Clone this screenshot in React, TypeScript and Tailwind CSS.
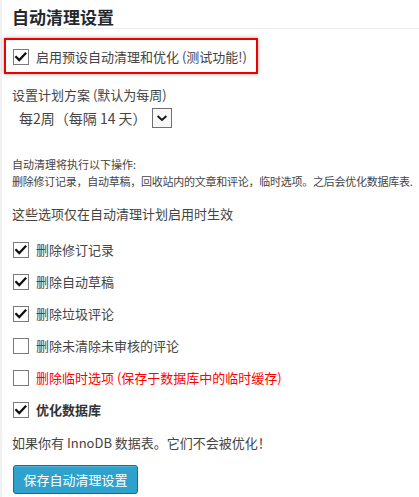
import { useState } from "react";

type Option = {
  id: string;
  label: string;
  checked: boolean;
  tone?: "danger" | "strong";
};

const initialOptions: Option[] = [
  { id: "revisions", label: "删除修订记录", checked: true },
  { id: "drafts", label: "删除自动草稿", checked: true },
  { id: "spam", label: "删除垃圾评论", checked: true },
  { id: "unapproved", label: "删除未清除未审核的评论", checked: false },
  {
    id: "transients",
    label: "删除临时选项 (保存于数据库中的临时缓存)",
    checked: false,
    tone: "danger",
  },
  { id: "optimize", label: "优化数据库", checked: true, tone: "strong" },
];

function CheckBox({ checked, onToggle }: { checked: boolean; onToggle: () => void }) {
  return (
    <button
      type="button"
      onClick={onToggle}
      className="flex h-4 w-4 shrink-0 items-center justify-center border border-[#7a7a7a] bg-white"
    >
      {checked && (
        <svg viewBox="0 0 16 16" className="h-4 w-4">
          <polyline
            points="2.5,8 6,11.5 13,4"
            fill="none"
            stroke="#111"
            strokeWidth="2.6"
            strokeLinecap="square"
          />
        </svg>
      )}
    </button>
  );
}

export default function App() {
  const [enabled, setEnabled] = useState(true);
  const [options, setOptions] = useState(initialOptions);

  function toggleOption(id: string) {
    setOptions((current) =>
      current.map((option) =>
        option.id === id ? { ...option, checked: !option.checked } : option,
      ),
    );
  }

  return (
    <div className="min-h-[497px] border-l-2 border-[#f1f1f1] bg-white font-['Noto_Sans_CJK_SC',sans-serif] text-[13px] text-[#444]">
      <h2 className="ml-[7px] border-b border-[#eee] pl-[3px] pt-[6px] text-[17px] font-bold leading-[22px] text-[#23282d]">
        自动清理设置
      </h2>

      <div className="ml-[2px] mt-[9px] flex h-[36px] w-[254px] items-center gap-[7px] border-2 border-[#e00] pl-[7px] pt-[1px] shadow-[0_0_4px_rgba(0,0,0,0.35)]">
        <CheckBox checked={enabled} onToggle={() => setEnabled(!enabled)} />
        <span className="leading-[18px]">启用预设自动清理和优化 (测试功能!)</span>
      </div>

      <p className="ml-[10px] mt-[12px] leading-[18px]">设置计划方案 (默认为每周)</p>

      <div className="ml-[12px] mt-px flex h-[26px] items-center">
        <span className="pl-[5px] pr-[5px] text-[14px] leading-[20px]">每2周（每隔 14 天）</span>
        <span className="flex h-[20px] w-[20px] items-center justify-center border border-[#707070] bg-[#f7f7f7]">
          <svg viewBox="0 0 20 20" className="h-[16px] w-[16px]">
            <polyline
              points="4.5,7.5 10,12.5 15.5,7.5"
              fill="none"
              stroke="#111"
              strokeWidth="2.2"
            />
          </svg>
        </span>
      </div>

      <div className="ml-[10px] mt-[25px] text-[11px] leading-[17px]">
        <p>自动清理将执行以下操作:</p>
        <p className="whitespace-nowrap tracking-[-0.25px]">
          删除修订记录，自动草稿，回收站内的文章和评论，临时选项。之后会优化数据库表.
        </p>
      </div>

      <p className="ml-[10px] mt-[15px] leading-[18px]">这些选项仅在自动清理计划启用时生效</p>

      <ul className="ml-[11px] mt-[11px] flex flex-col">
        {options.map((option) => (
          <li key={option.id} className="flex h-[32px] items-center gap-[7px]">
            <CheckBox checked={option.checked} onToggle={() => toggleOption(option.id)} />
            <span
              className={`leading-[18px] ${
                option.tone === "danger"
                  ? "text-[#f00]"
                  : option.tone === "strong"
                    ? "font-bold text-[#333]"
                    : ""
              }`}
            >
              {option.label}
            </span>
          </li>
        ))}
      </ul>

      <p className="ml-[10px] mt-[8px] leading-[18px]">如果你有 InnoDB 数据表。它们不会被优化！</p>

      <button
        type="button"
        className="ml-[11px] mt-[13px] flex h-[29px] w-[125px] items-center justify-center rounded-[3px] border border-[#0074a2] bg-[#2ea2cc] text-[13px] text-white shadow-[inset_0_1px_0_rgba(120,200,230,0.5)]"
      >
        保存自动清理设置
      </button>
    </div>
  );
}
